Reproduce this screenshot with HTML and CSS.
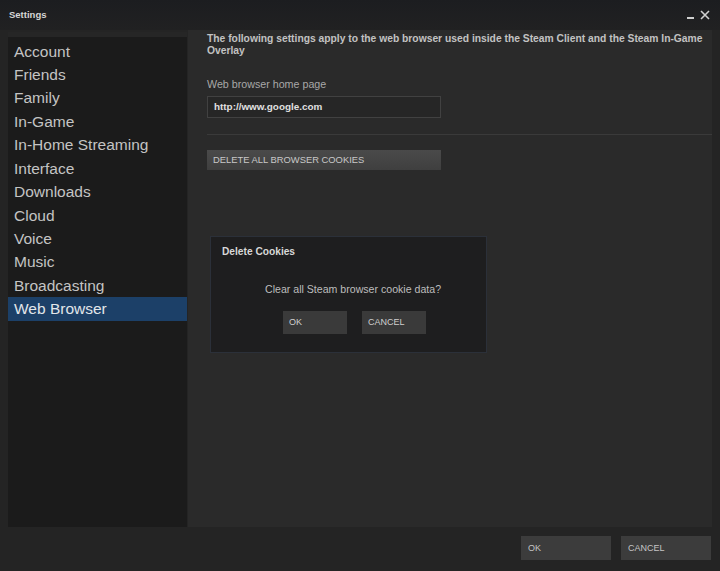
FILE: index.html
```html
<!DOCTYPE html>
<html>
<head>
<meta charset="utf-8">
<link rel="stylesheet" href="styles.css">
</head>
<body>
<div class="window">
  <div class="titlebar">
    <span class="title">Settings</span>
    <div class="controls">
      <span class="min"></span>
      <svg class="close" width="10" height="10" viewBox="0 0 10 10"><path d="M1 1L9 9M9 1L1 9" stroke="#d0d0d0" stroke-width="1.6"/></svg>
    </div>
  </div>
  <div class="main">
    <ul class="sidebar">
      <li>Account</li>
      <li>Friends</li>
      <li>Family</li>
      <li>In-Game</li>
      <li>In-Home Streaming</li>
      <li>Interface</li>
      <li>Downloads</li>
      <li>Cloud</li>
      <li>Voice</li>
      <li>Music</li>
      <li>Broadcasting</li>
      <li class="active">Web Browser</li>
    </ul>
    <div class="content">
      <p class="intro">The following settings apply to the web browser used inside the Steam Client and the Steam In-Game Overlay</p>
      <label class="label">Web browser home page</label>
      <div class="input">http://www.google.com</div>
      <div class="divider"></div>
      <div class="btn wide">DELETE ALL BROWSER COOKIES</div>
    </div>
  </div>
  <div class="footer">
    <div class="btn foot">OK</div>
    <div class="btn foot">CANCEL</div>
  </div>
  <div class="dialog">
    <div class="dlg-title">Delete Cookies</div>
    <div class="dlg-msg">Clear all Steam browser cookie data?</div>
    <div class="dlg-btns">
      <div class="btn dlg">OK</div>
      <div class="btn dlg">CANCEL</div>
    </div>
  </div>
</div>
</body>
</html>
```
FILE: styles.css
```css
* { box-sizing: border-box; }
html, body { margin: 0; padding: 0; }
body {
  background: #242424;
  font-family: "Liberation Sans", Arial, sans-serif;
  width: 720px;
  height: 571px;
  overflow: hidden;
}
.window {
  position: relative;
  width: 720px;
  height: 571px;
  background: #242424;
}
.titlebar {
  height: 30px;
  display: flex;
  justify-content: space-between;
  align-items: flex-start;
  padding: 9px 10px 0 9px;
  background: linear-gradient(#1c1d20, #212122);
}
.title {
  font-size: 9.5px;
  font-weight: bold;
  color: #d6d6d6;
}
.controls {
  display: flex;
  align-items: flex-end;
  gap: 6px;
  padding-top: 1px;
}
.min {
  width: 7px;
  height: 2px;
  background: #cfcfcf;
  margin-bottom: 1px;
}
.main {
  display: flex;
  height: 497px;
  padding: 0 8px;
}
.sidebar {
  list-style: none;
  margin: 2px 0 0 0;
  padding: 2.5px 0 0 0;
  width: 179px;
  background: #1b1b1b;
  border-top: 5px solid #262626;
}
.sidebar li {
  height: 23.45px;
  line-height: 23.45px;
  padding-left: 6px;
  font-size: 15.5px;
  color: #c4c4c4;
}
.sidebar li.active {
  background: #1c4068;
  color: #e2e6ea;
}
.content {
  flex: 1;
  margin-left: 1px;
  background: #2a2a2a;
  padding: 3px 0 0 19px;
  display: flex;
  flex-direction: column;
  align-items: flex-start;
}
.intro {
  margin: 0;
  font-size: 10.3px;
  font-weight: bold;
  color: #c2c2c2;
  line-height: 12px;
  width: 500px;
}
.label {
  margin-top: 21px;
  font-size: 10.7px;
  color: #a8a8a8;
}
.input {
  margin-top: 6px;
  width: 234px;
  height: 22px;
  border: 1px solid #414141;
  background: #262626;
  color: #e0e0e0;
  font-size: 9.9px;
  font-weight: bold;
  line-height: 20px;
  padding-left: 6px;
}
.divider {
  margin-top: 16px;
  align-self: stretch;
  height: 1px;
  background: #3a3a3a;
}
.btn {
  color: #c8c8c8;
  font-size: 9.4px;
}
.btn.wide {
  margin-top: 15px;
  width: 234px;
  height: 20px;
  line-height: 20px;
  padding-left: 6px;
  background: linear-gradient(#4a4a4a, #3f3f3f);
}
.footer {
  display: flex;
  justify-content: flex-end;
  gap: 10px;
  padding: 9px 9px 0 0;
  height: 44px;
}
.btn.foot {
  width: 90px;
  height: 24px;
  line-height: 24px;
  padding-left: 7px;
  background: #3c3c3c;
  color: #c4c4c4;
  font-size: 9px;
}
.dialog {
  position: absolute;
  left: 210px;
  top: 236px;
  width: 277px;
  height: 117px;
  background: #1e1e1f;
  border: 1px solid #2b3039;
  padding: 9px 0 0 11px;
}
.dlg-title {
  font-size: 10.2px;
  font-weight: bold;
  color: #d8d8d8;
}
.dlg-msg {
  margin-top: 26px;
  margin-left: 43px;
  font-size: 10.6px;
  color: #bdbdbd;
}
.dlg-btns {
  display: flex;
  gap: 15px;
  margin-top: 16px;
  margin-left: 61px;
}
.btn.dlg {
  width: 64px;
  height: 23px;
  line-height: 23px;
  padding-left: 6px;
  background: #3a3a3a;
  color: #cfcfcf;
  font-size: 9px;
}
```
